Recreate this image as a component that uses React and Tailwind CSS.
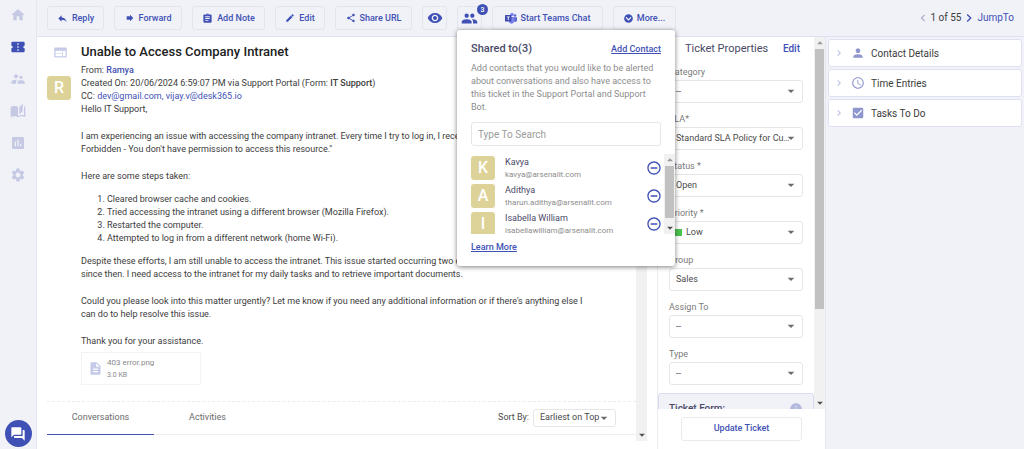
import React from "react";
import {
  MdHome, MdConfirmationNumber, MdSupervisorAccount, MdAutoStories, MdInsertChart, MdSettings,
  MdForum, MdReply, MdForward, MdAssignment, MdEdit, MdShare, MdVisibility, MdGroup,
  MdChevronLeft, MdChevronRight, MdWeb, MdRemoveCircleOutline, MdPerson, MdAccessTime,
  MdCheckBox, MdDescription, MdArrowDropDown, MdArrowDropUp, MdInfo,
} from "react-icons/md";
import { FaChevronCircleDown } from "react-icons/fa";

const NAV = [
  { label: "Home", Icon: MdHome },
  { label: "Tickets", Icon: MdConfirmationNumber, active: true },
  { label: "Contacts", Icon: MdSupervisorAccount },
  { label: "Knowledge Base", Icon: MdAutoStories },
  { label: "Reports", Icon: MdInsertChart },
  { label: "Settings", Icon: MdSettings },
];

const CONTACTS = [
  { name: "Kavya", email: "kavya@arsenalit.com" },
  { name: "Adithya", email: "tharun.adithya@arsenalit.com" },
  { name: "Isabella William", email: "isabellawilliam@arsenalit.com" },
];

const FIELDS = [
  { id: "category", label: "Category", value: "--" },
  { id: "sla", label: "SLA*", value: "Standard SLA Policy for Customers" },
  { id: "status", label: "Status *", value: "Open" },
  { id: "priority", label: "Priority *", value: "Low", dot: true },
  { id: "group", label: "Group", value: "Sales" },
  { id: "assign", label: "Assign To", value: "--" },
  { id: "type", label: "Type", value: "--" },
];

const PANELS = [
  { label: "Contact Details", Icon: MdPerson },
  { label: "Time Entries", Icon: MdAccessTime },
  { label: "Tasks To Do", Icon: MdCheckBox },
];

function TeamsIcon() {
  return (
    <svg viewBox="0 0 24 24" className="size-3 shrink-0" aria-hidden="true">
      <circle cx="20" cy="7" r="2.500" fill="#5b64cf" />
      <circle cx="14" cy="5" r="3.500" fill="#7b83eb" />
      <path d="M16 10.500h7a1 1 0 0 1 1 1V16a4 4 0 0 1-5 3.900z" fill="#5b64cf" />
      <path d="M8 10h11v8a6 6 0 0 1-11 2.500z" fill="#7b83eb" />
      <rect x="0" y="6" width="13" height="13" rx="1.200" fill="#3f4bb0" />
      <path d="M3.500 9h6v1.700H7.400V16H5.600v-5.300H3.500z" fill="#fff" />
    </svg>
  );
}

function ToolButton({ children, className }) {
  return (
    <button type="button" className={`flex h-6 shrink-0 items-center justify-center gap-1 rounded-[3px] border border-[#e3e4ec] ${className}`}>
      {children}
    </button>
  );
}

function Scrollbar({ thumb, up = true }) {
  return (
    <div className="flex w-[11px] shrink-0 flex-col bg-[#f1f1f1]" aria-hidden="true">
      <div className="flex h-3 shrink-0 items-center justify-center text-[#9a9a9a]">{up && <MdArrowDropUp size={14} className="shrink-0" />}</div>
      <div className="flex-1">
        <div className={`mx-px bg-[#c1c1c1] ${thumb}`} />
      </div>
      <div className="flex h-3 shrink-0 items-center justify-center text-[#505050]"><MdArrowDropDown size={14} className="shrink-0" /></div>
    </div>
  );
}

function Avatar({ letter }) {
  return (
    <span className="flex size-6 shrink-0 items-center justify-center rounded-[3px] bg-[#ddd398] text-base font-medium text-white">
      {letter}
    </span>
  );
}

function SharePopover() {
  return (
    <div className="absolute left-0 top-6 z-10 w-[218px] rounded-[3px] bg-white px-3.5 pb-3 pt-3 font-normal shadow-[0_1px_5px_rgba(0,0,0,0.5)]">
      <div className="flex items-center justify-between">
        <h2 className="text-[11px] font-medium leading-[14px] text-[#4a4a68]">Shared to(3)</h2>
        <a href="#add" className="text-[9px] font-medium leading-[14px] text-[#3f51b5] underline">Add Contact</a>
      </div>
      <p className="mt-1.5 text-[9px] leading-[13px] text-[#8d8d8d]">
        Add contacts that you would like to be alerted about conversations and also have access to this ticket in the Support Portal and Support Bot.
      </p>
      <input
        type="text"
        aria-label="Search contacts"
        placeholder="Type To Search"
        className="mt-2 block h-6 w-full rounded-[3px] border border-[#e6e6e6] px-1.5 text-[10px] placeholder:text-[#9b9b9b]"
      />
      <div className="-mr-3.5 mt-2 flex h-20">
        <ul className="flex flex-1 flex-col gap-1 overflow-hidden pt-0.5">
          {CONTACTS.map((c) => (
            <li key={c.name} className="flex shrink-0 items-center gap-2.5">
              <Avatar letter={c.name[0]} />
              <div className="flex-1">
                <div className="text-[9px] leading-[13px] text-[#4a4a68]">{c.name}</div>
                <div className="text-[8px] leading-[11px] text-[#8d8d8d]">{c.email}</div>
              </div>
              <button type="button" aria-label={`Remove ${c.name}`} className="mr-0.5 text-[#3f51b5]">
                <MdRemoveCircleOutline size={16} />
              </button>
            </li>
          ))}
        </ul>
        <Scrollbar thumb="h-[52px]" />
      </div>
      <a href="#learn" className="mt-1.5 block text-[9px] font-medium leading-[14px] text-[#3f51b5] underline">Learn More</a>
    </div>
  );
}

function Toolbar() {
  return (
    <header className="flex h-[37px] shrink-0 items-center justify-between border-b border-[#dfe1f2] px-2.5 text-[9px] font-medium leading-[14px] text-[#3f51b5]">
      <div className="flex items-center gap-2.5">
        <ToolButton className="min-w-[57px]"><MdReply size={11} />Reply</ToolButton>
        <ToolButton className="min-w-[68px]"><MdForward size={10} />Forward</ToolButton>
        <ToolButton className="min-w-[73px]"><MdAssignment size={11} />Add Note</ToolButton>
        <ToolButton className="min-w-[50px]"><MdEdit size={10} />Edit</ToolButton>
        <ToolButton className="min-w-[77px]"><MdShare size={10} />Share URL</ToolButton>
        <button type="button" aria-label="Watch" className="flex h-6 w-[25px] items-center justify-center rounded-[3px] border border-[#e3e4ec]">
          <MdVisibility size={16} />
        </button>
        <div className="relative">
          <button type="button" aria-label="Share ticket" className="flex h-6 w-[25px] items-center justify-center rounded-[3px] border border-[#e3e4ec]">
            <MdGroup size={17} />
          </button>
          <span className="absolute -right-1.5 -top-0.5 flex size-[11px] items-center justify-center rounded-full bg-[#3f51b5] text-[7px] text-white">3</span>
          <SharePopover />
        </div>
        <ToolButton className="min-w-[111px]"><TeamsIcon />Start Teams Chat</ToolButton>
        <ToolButton className="min-w-[63px]"><FaChevronCircleDown size={9} />More...</ToolButton>
      </div>
      <nav aria-label="Ticket paging" className="flex items-center text-[10px]">
        <button type="button" aria-label="Previous ticket" className="text-[#a9adc4]"><MdChevronLeft size={14} /></button>
        <span className="font-normal text-[#3c3c3c]">1 of 55</span>
        <button type="button" aria-label="Next ticket"><MdChevronRight size={16} /></button>
        <a href="#jump" className="font-normal">JumpTo</a>
      </nav>
    </header>
  );
}

function Ticket() {
  return (
    <main className="flex min-w-0 flex-1 bg-white">
      <div className="flex min-w-0 flex-1 flex-col pl-2.5">
        <div className="flex pr-10 pt-1.5">
          <div className="flex w-[34px] shrink-0 flex-col items-start gap-4">
            <MdWeb size={15} className="ml-1.5 mt-0.5 text-[#c5cae9]" />
            <Avatar letter="R" />
          </div>
          <article className="min-w-0 flex-1 text-[9px] leading-[13px] text-[#3c3c3c]">
            <h1 className="text-[13px] font-medium leading-[18px] text-[#212121]">Unable to Access Company Intranet</h1>
            <p className="mt-[3px]">From: <a href="#ramya" className="font-medium text-[#3f51b5]">Ramya</a></p>
            <p>Created On: 20/06/2024 6:59:07 PM via Support Portal (Form: <b className="font-medium">IT Support</b>)</p>
            <p>CC: <a href="#cc" className="text-[#3f51b5]">dev@gmail.com, vijay.v@desk365.io</a></p>
            <p>Hello IT Support,</p>
            <p className="mt-3.5">
              I am experiencing an issue with accessing the company intranet. Every time I try to log in, I receive an error message: "403 Forbidden - You don't have permission to access this resource."
            </p>
            <p className="mt-3.5">Here are some steps taken:</p>
            <ol className="my-2.5 list-decimal pl-[26px]">
              <li>Cleared browser cache and cookies.</li>
              <li>Tried accessing the intranet using a different browser (Mozilla Firefox).</li>
              <li>Restarted the computer.</li>
              <li>Attempted to log in from a different network (home Wi-Fi).</li>
            </ol>
            <p>
              Despite these efforts, I am still unable to access the intranet. This issue started occurring two days ago and has been persistent since then. I need access to the intranet for my daily tasks and to retrieve important documents.
            </p>
            <p className="mt-3.5">
              Could you please look into this matter urgently? Let me know if you need any additional information or if there's anything else I can do to help resolve this issue.
            </p>
            <p className="mt-3.5">Thank you for your assistance.</p>
            <a href="#file" className="mt-1 flex h-[33px] w-[120px] items-center gap-1 border border-[#f3f3f3] px-1.5 text-[#8a8a8a]">
              <MdDescription size={15} className="text-[#c5cae9]" />
              <span>
                <span className="block text-[8px] leading-[13px]">403 error.png</span>
                <span className="block text-[7px] leading-[13px]">3.0 KB</span>
              </span>
            </a>
          </article>
        </div>
        <div className="mt-4 border-t border-dashed border-[#ececec]">
          <div className="flex items-stretch justify-between border-b border-[#eee] pr-5 text-[9px] text-[#6b6b6b]">
            <div role="tablist" className="flex">
              <button type="button" role="tab" aria-selected="true" className="-mb-px h-[33px] w-[107px] border-b border-[#3f51b5]">Conversations</button>
              <button type="button" role="tab" aria-selected="false" className="h-8 w-[107px]">Activities</button>
            </div>
            <div className="flex items-center gap-1">
              <label htmlFor="sort" className="text-[#4a4a4a]">Sort By:</label>
              <div className="relative">
                <select id="sort" className="block h-[18px] w-[83px] appearance-none rounded-[3px] border border-[#e6e6e6] bg-white pl-1.5 text-[9px] text-[#4a4a4a]">
                  <option>Earliest on Top</option>
                </select>
                <MdArrowDropDown size={16} className="pointer-events-none absolute right-1 top-px text-[#6b6b6b]" />
              </div>
            </div>
          </div>
        </div>
      </div>
      <div className="mb-2 mr-2.5 flex"><Scrollbar thumb="h-[200px]" /></div>
    </main>
  );
}

function Properties() {
  return (
    <section className="flex w-[168px] shrink-0 flex-col border-l border-[#ececf2] bg-white">
      <div className="flex min-h-0 flex-1">
        <div className="min-w-0 flex-1 overflow-hidden">
          <div className="px-[11px] pt-[5px]">
            <div className="flex items-center justify-between pl-4 pr-[3px]">
              <h2 className="text-[11px] leading-[14px] text-[#4a4a68]">Ticket Properties</h2>
              <a href="#edit" className="text-[10px] font-medium leading-[14px] text-[#3f51b5]">Edit</a>
            </div>
            <div className="mt-2 flex flex-col gap-2">
              {FIELDS.map((f) => (
                <div key={f.id}>
                  <label htmlFor={f.id} className="block text-[9px] leading-4 text-[#7a7a7a]">{f.label}</label>
                  <div className="relative">
                    <select id={f.id} className={`block h-[23px] w-full appearance-none truncate rounded-[3px] border border-[#e6e6e6] bg-white pr-3 text-[9px] text-[#4a4a4a] ${f.dot ? "pl-4" : "pl-1.5"}`}>
                      <option>{f.value}</option>
                    </select>
                    {f.dot && <span className="absolute left-1.5 top-2 size-[7px] bg-[#4bc14f]" />}
                    <MdArrowDropDown size={16} className="pointer-events-none absolute right-1 top-[3px] text-[#6b6b6b]" />
                  </div>
                </div>
              ))}
            </div>
          </div>
          <div className="mt-2 flex items-center justify-between rounded-[3px] border border-[#d7daf0] bg-[#f1f2f8] px-2.5 py-2">
            <h3 className="text-[10px] font-medium leading-[14px] text-[#4a4a68]">Ticket Form:</h3>
            <MdInfo size={14} className="text-[#b3b9de]" />
          </div>
        </div>
        <Scrollbar thumb="h-[260px]" />
      </div>
      <div className="px-[23px] py-2">
        <button type="button" className="block h-6 w-full rounded-[3px] border border-[#e9e9ee] text-[9px] font-medium text-[#3f51b5]">Update Ticket</button>
      </div>
    </section>
  );
}

export default function App() {
  return (
    <div className="flex h-screen overflow-hidden bg-[#f1f2f8] font-[Roboto,sans-serif]">
      <aside className="flex w-[37px] shrink-0 flex-col items-center justify-between border-r border-[#e4e6f2] pb-0.5 pt-[7px]">
        <nav aria-label="Main" className="flex flex-col gap-4">
          {NAV.map(({ label, Icon, active }) => (
            <a key={label} href="#nav" aria-label={label} className={active ? "text-[#3f51b5]" : "text-[#c5c9e3]"}>
              <Icon size={16} />
            </a>
          ))}
        </nav>
        <button type="button" aria-label="Chat" className="flex size-[27px] items-center justify-center rounded-full bg-[#3f51b5] text-white">
          <MdForum size={16} />
        </button>
      </aside>
      <div className="flex min-w-0 flex-1 flex-col">
        <Toolbar />
        <div className="flex min-h-0 flex-1">
          <Ticket />
          <Properties />
          <section className="flex w-[199px] shrink-0 flex-col gap-0.5 border-l border-[#e4e6f2] px-0.5 pt-0.5">
            {PANELS.map(({ label, Icon }) => (
              <button key={label} type="button" className="flex h-7 items-center rounded-[3px] border border-[#dfe1f2] bg-white pl-1 text-[10px] text-[#3c3c3c]">
                <MdChevronRight size={12} className="text-[#b9bfe2]" />
                <Icon size={14} className="mx-1.5 text-[#8f97cf]" />
                {label}
              </button>
            ))}
          </section>
        </div>
      </div>
    </div>
  );
}
